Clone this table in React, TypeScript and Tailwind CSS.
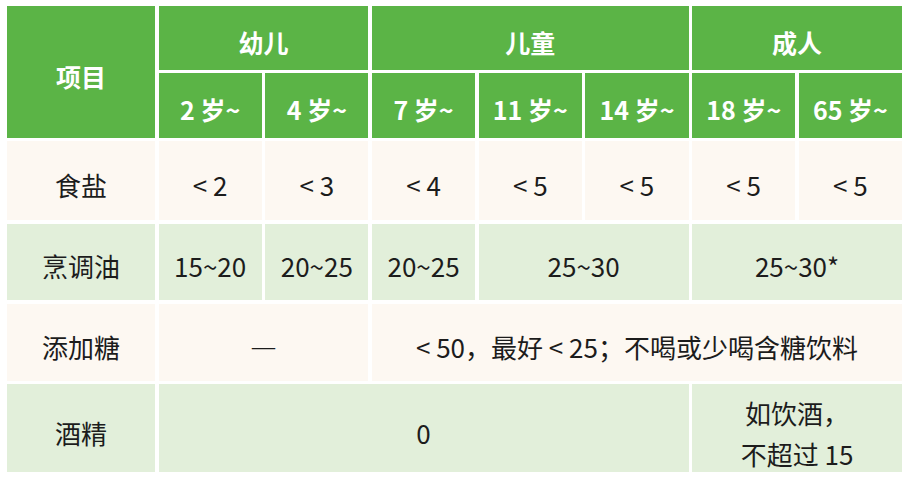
import React from "react";

const G = "bg-[#5bb446] text-white font-bold text-[25px]";
const C = "bg-[#fdf8f2] text-[#1c1c1c] text-[26px]";
const L = "bg-[#e2efda] text-[#1c1c1c] text-[26px]";
const cell = "flex items-center justify-center text-center pt-[9px] whitespace-nowrap";

export default function App() {
  return (
    <div
      className="w-[906px] h-[480px] bg-white pl-[7px] pt-[6px]"
      style={{ fontFamily: '"Noto Sans CJK SC", "Noto Sans", sans-serif' }}
    >
      <div className="w-[895px] grid grid-cols-[148px_repeat(7,1fr)] grid-rows-[63.5px_64.5px_79px_76.5px_77px_88px] gap-[3.5px] leading-none">
        <div className={`${cell} ${G} row-span-2`}>项目</div>
        <div className={`${cell} ${G} col-span-2`}>幼儿</div>
        <div className={`${cell} ${G} col-span-3`}>儿童</div>
        <div className={`${cell} ${G} col-span-2`}>成人</div>
        {["2 岁~", "4 岁~", "7 岁~", "11 岁~", "14 岁~", "18 岁~", "65 岁~"].map((t) => (
          <div key={t} className={`${cell} ${G}`}>{t}</div>
        ))}

        <div className={`${cell} ${C}`}>食盐</div>
        {["< 2", "< 3", "< 4", "< 5", "< 5", "< 5", "< 5"].map((t, i) => (
          <div key={i} className={`${cell} ${C}`}>{t}</div>
        ))}

        <div className={`${cell} ${L}`}>烹调油</div>
        <div className={`${cell} ${L}`}>15~20</div>
        <div className={`${cell} ${L}`}>20~25</div>
        <div className={`${cell} ${L}`}>20~25</div>
        <div className={`${cell} ${L} col-span-2`}>25~30</div>
        <div className={`${cell} ${L} col-span-2`}>25~30*</div>

        <div className={`${cell} ${C}`}>添加糖</div>
        <div className={`${cell} ${C} col-span-2`}>
          <span className="font-['DejaVu_Sans'] font-light">—</span>
        </div>
        <div className={`${cell} ${C} col-span-5`}>&lt; 50，最好 &lt; 25；不喝或少喝含糖饮料</div>

        <div className={`${cell} ${L}`}>酒精</div>
        <div className={`${cell} ${L} col-span-5`}>0</div>
        <div className={`${cell} ${L} col-span-2 flex-col leading-[41px]`}>
          <span>如饮酒，</span>
          <span>不超过 15</span>
        </div>
      </div>
    </div>
  );
}
